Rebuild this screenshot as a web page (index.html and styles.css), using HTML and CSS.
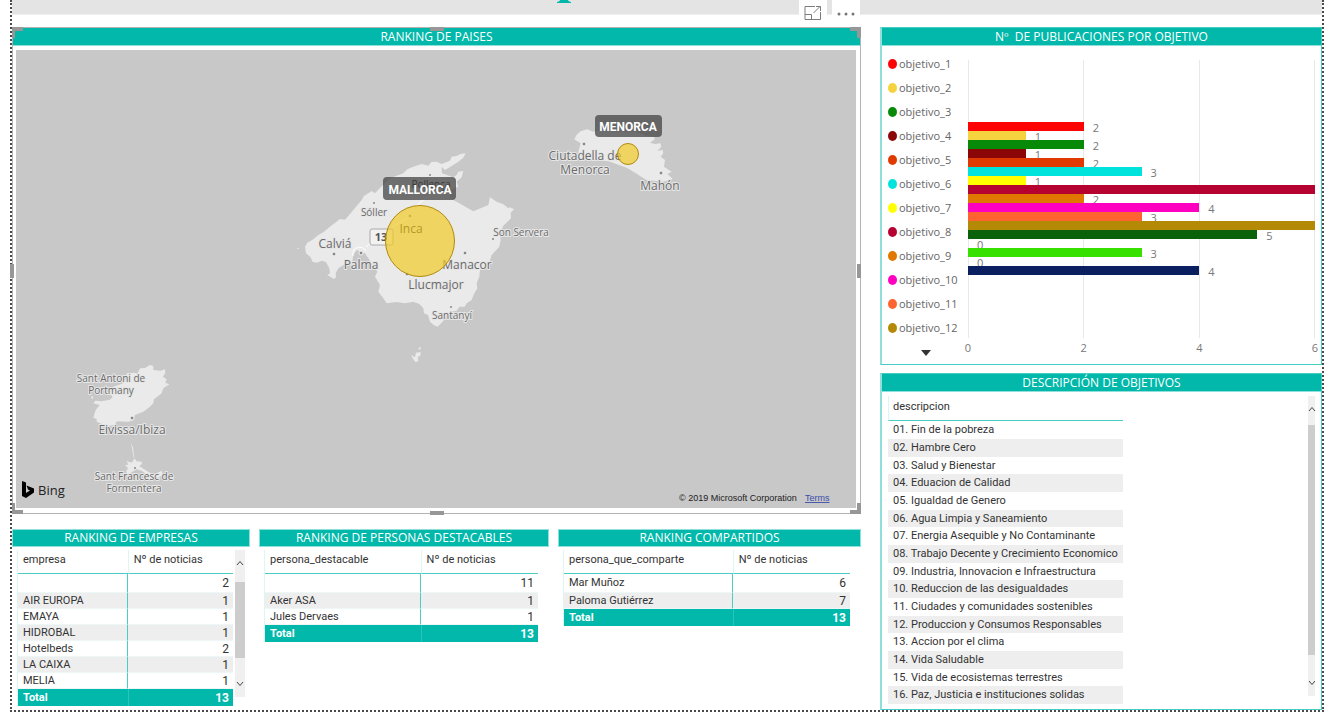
FILE: index.html
```html
<!DOCTYPE html>
<html lang="es">
<head>
<meta charset="utf-8">
<title>Ranking de noticias</title>
<link rel="stylesheet" href="styles.css">
</head>
<body>
<main class="report">
  <header class="banner">
    <svg class="banner-mark" viewBox="0 0 14 3" aria-hidden="true"><path d="M3 0h8q0 1.600 3 2v1H0V2q3-.4 3-2z"/></svg>
    <div class="tools">
      <button class="tool" type="button" aria-label="Modo de enfoque">
        <svg viewBox="0 0 18 16"><path d="M11 1.500H1v13h15.500V7M1 9.500h6.500v5M9.500 8l6.500-6.500M12 1.500h4.500V6"/></svg>
      </button>
      <button class="tool tool-more" type="button" aria-label="Más opciones">
        <svg viewBox="0 0 18 4"><circle cx="2" cy="2" r="1.500"/><circle cx="9" cy="2" r="1.500"/><circle cx="16" cy="2" r="1.500"/></svg>
      </button>
    </div>
  </header>

  <div class="columns">
    <div class="column">
      <section class="panel-map">
        <h2 class="title">RANKING DE PAISES</h2>
        <svg class="map" viewBox="16 50 840 458" role="img" aria-label="Mapa de las Islas Baleares">
          <g class="land">
            <path transform="translate(290 140) scale(.3333)" d="M45 320L52 308 70 298 84 286 100 277 118 262 150 237 165 239 180 222 215 180 222 168 245 153 255 160 272 142 285 130 300 115 340 100 352 88 370 80 395 72 415 77 425 66 440 65 455 72 480 62 485 50 500 48 512 42 527 40 520 53 505 65 485 78 465 90 455 80 456 100 490 112 500 105 505 95 520 93 515 112 500 125 505 140 480 150 480 175 500 185 550 214 595 195 600 172 620 185 640 193 655 205 660 202 672 208 662 218 663 235 640 257 630 280 632 300 628 320 605 345 600 362 590 375 570 390 568 410 560 430 562 445 552 462 545 480 530 490 524 500 508 500 500 512 480 515 465 530 460 543 443 560 432 556 420 545 414 525 402 520 400 505 388 492 370 485 345 490 320 486 290 490 280 475 265 455 270 435 255 410 262 395 248 375 235 355 225 340 200 330 190 345 187 365 165 372 145 385 137 400 138 412 132 417 112 405 120 400 118 385 108 366 95 362 82 368 68 366 62 352 48 340z"/>
            <path transform="translate(290 140) scale(.3333)" d="M363 645L375 652 378 638 392 636 391 648 383 650 385 664 376 666 370 658zM386 624l6-4 0 6-5 4zM20 324l8-1-3 4z"/>
            <path transform="translate(530 100) scale(.3333)" d="M133 118L140 104 152 94 172 88 190 95 215 90 250 95 320 95 350 108 372 110 374 118 360 128 375 132 392 130 394 140 382 152 398 150 400 160 392 170 405 180 402 200 425 215 412 222 428 236 400 245 350 240 330 228 318 220 290 203 240 185 200 178 150 175 145 155 152 130z"/>
            <path transform="translate(0 350) scale(.3333)" d="M328 130L340 110 370 100 380 84 380 70 405 68 412 72 420 55 435 54 450 45 460 48 460 60 482 62 495 58 496 68 489 80 500 88 496 98 508 103 490 115 485 130 462 148 460 160 450 170 430 185 405 195 400 210 385 215 350 214 345 225 320 228 290 215 290 207 280 203 287 180 299 165 280 160 286 152 304 154 330 149 338 141z"/>
            <path transform="translate(0 350) scale(.3333)" d="M375 345L385 344 380 333 395 338 404 325 410 334 425 335 426 342 418 348 430 356 450 368 465 372 485 362 488 376 470 385 450 380 425 362 410 358 392 368 388 380 378 365 384 354zM393 280l6 12 4 30-2 1-5-30zM274 138l5 2v7l-5-3z"/>
          </g>
          <g class="road">
            <path d="M353 256a7 7 0 0 1 13-5M366 247L375 238M392 227L409 217M416 206Q424 198 434 194"/>
          </g>
          <g class="towns">
            <circle cx="334" cy="254" r="2"/><circle cx="361" cy="253" r="2"/><circle cx="410" cy="216" r="2"/><circle cx="465" cy="253" r="2"/><circle cx="407" cy="274" r="2"/>
            <circle cx="584" cy="144" r="2"/><circle cx="661" cy="173" r="2"/><circle cx="132" cy="418" r="2"/>
          </g>
          <g class="villages">
            <circle cx="374" cy="203" r="1"/><circle cx="430" cy="175" r="1"/><circle cx="493" cy="239" r="1"/><circle cx="451" cy="307" r="1"/><circle cx="135" cy="468" r="1"/>
          </g>
          <g class="place place-large">
            <text x="335" y="248">Calviá</text><text x="361" y="269">Palma</text><text class="covered" x="411" y="233">Inca</text>
            <text x="467" y="269">Manacor</text><text x="436" y="289">Llucmajor</text>
            <text x="585" y="160">Ciutadella de</text><text x="585" y="174">Menorca</text><text x="660" y="190">Mahón</text>
            <text x="132" y="434">Eivissa/Ibiza</text>
          </g>
          <g class="place place-small">
            <text x="374" y="216">Sóller</text><text class="covered" x="431" y="188">Pollença</text><text x="521" y="236">Son Servera</text><text x="452" y="319">Santanyí</text>
            <text x="111" y="382">Sant Antoni de</text><text x="111" y="394">Portmany</text>
            <text x="134" y="480">Sant Francesc de</text><text x="134" y="492">Formentera</text>
          </g>
          <g class="shield"><rect x="370" y="229" width="23" height="16" rx="2"/><text x="381" y="241">13</text></g>
          <g class="bubble"><ellipse cx="420" cy="241" rx="34.500" ry="35.500"/><circle cx="628" cy="154" r="10.500"/></g>
          <g class="tag">
            <rect x="383" y="177" width="73" height="23" rx="4"/><text x="420" y="194">MALLORCA</text>
            <rect x="595" y="115" width="67" height="22" rx="4"/><text x="628" y="131">MENORCA</text>
          </g>
          <path class="bing" d="M22 481l4 1.500v10.500l4-2.500-2-1-1.500-4 7.500 3v4L26 498l-4-2z"/>
          <text class="bing-name" x="38" y="495">Bing</text>
          <text class="legal" x="679" y="501">© 2019 Microsoft Corporation</text>
          <a href="#terms"><text class="legal legal-link" x="805" y="501">Terms</text></a>
        </svg>
        <i class="grip grip-nw"></i><i class="grip grip-n"></i><i class="grip grip-ne"></i>
        <i class="grip grip-w"></i><i class="grip grip-e"></i>
        <i class="grip grip-sw"></i><i class="grip grip-s"></i><i class="grip grip-se"></i>
      </section>

      <div class="rankings">
        <section class="ranking">
          <h2 class="title">RANKING DE EMPRESAS</h2>
          <div class="ranking-body">
            <table class="table">
              <colgroup><col class="col-empresa"><col></colgroup>
              <thead><tr><th>empresa</th><th>Nº de noticias</th></tr></thead>
              <tbody>
                <tr><td></td><td>2</td></tr>
                <tr><td>AIR EUROPA</td><td>1</td></tr>
                <tr><td>EMAYA</td><td>1</td></tr>
                <tr><td>HIDROBAL</td><td>1</td></tr>
                <tr><td>Hotelbeds</td><td>2</td></tr>
                <tr><td>LA CAIXA</td><td>1</td></tr>
                <tr><td>MELIA</td><td>1</td></tr>
              </tbody>
              <tfoot><tr><td>Total</td><td>13</td></tr></tfoot>
            </table>
            <div class="scroll scroll-empresas">
              <svg viewBox="0 0 8 6"><path d="M1 5l3-3.500L7 5"/></svg>
              <span class="thumb"></span>
              <svg viewBox="0 0 8 6"><path d="M1 1l3 3.500L7 1"/></svg>
            </div>
          </div>
        </section>
        <section class="ranking">
          <h2 class="title">RANKING DE PERSONAS DESTACABLES</h2>
          <div class="ranking-body ranking-people">
            <table class="table">
              <colgroup><col class="col-persona"><col></colgroup>
              <thead><tr><th>persona_destacable</th><th>Nº de noticias</th></tr></thead>
              <tbody>
                <tr><td></td><td>11</td></tr>
                <tr><td>Aker ASA</td><td>1</td></tr>
                <tr><td>Jules Dervaes</td><td>1</td></tr>
              </tbody>
              <tfoot><tr><td>Total</td><td>13</td></tr></tfoot>
            </table>
          </div>
        </section>
        <section class="ranking">
          <h2 class="title">RANKING COMPARTIDOS</h2>
          <div class="ranking-body ranking-people">
            <table class="table">
              <colgroup><col class="col-comparte"><col></colgroup>
              <thead><tr><th>persona_que_comparte</th><th>Nº de noticias</th></tr></thead>
              <tbody>
                <tr><td>Mar Muñoz</td><td>6</td></tr>
                <tr><td>Paloma Gutiérrez</td><td>7</td></tr>
              </tbody>
              <tfoot><tr><td>Total</td><td>13</td></tr></tfoot>
            </table>
          </div>
        </section>
      </div>
    </div>

    <div class="column column-side">
      <section class="panel-side panel-chart">
        <h2 class="title">Nº&nbsp; DE PUBLICACIONES POR OBJETIVO</h2>
        <div class="chart">
          <div class="legend">
            <ul class="legend-list">
              <li class="c1">objetivo_1</li><li class="c2">objetivo_2</li><li class="c3">objetivo_3</li><li class="c4">objetivo_4</li>
              <li class="c5">objetivo_5</li><li class="c6">objetivo_6</li><li class="c7">objetivo_7</li><li class="c8">objetivo_8</li>
              <li class="c9">objetivo_9</li><li class="c10">objetivo_10</li><li class="c11">objetivo_11</li><li class="c12">objetivo_12</li>
            </ul>
            <button class="legend-more" type="button" aria-label="Más objetivos"><svg viewBox="0 0 10 6"><path d="M0 0h10L5 6z"/></svg></button>
          </div>
          <div class="plot">
            <div class="area">
              <div class="gridlines"><i></i><i></i><i></i></div>
              <div class="bars">
                <div class="bar c1"><b style="width:33.333%"></b><span>2</span></div>
                <div class="bar c2"><b style="width:16.667%"></b><span>1</span></div>
                <div class="bar c3"><b style="width:33.333%"></b><span>2</span></div>
                <div class="bar c4"><b style="width:16.667%"></b><span>1</span></div>
                <div class="bar c5"><b style="width:33.333%"></b><span>2</span></div>
                <div class="bar c6"><b style="width:50%"></b><span>3</span></div>
                <div class="bar c7"><b style="width:16.667%"></b><span>1</span></div>
                <div class="bar c8"><b style="width:100%"></b></div>
                <div class="bar c9"><b style="width:33.333%"></b><span>2</span></div>
                <div class="bar c10"><b style="width:66.667%"></b><span>4</span></div>
                <div class="bar c11"><b style="width:50%"></b><span>3</span></div>
                <div class="bar c12"><b style="width:100%"></b></div>
                <div class="bar c13"><b style="width:83.333%"></b><span>5</span></div>
                <div class="bar c14"><b style="width:0%"></b><span>0</span></div>
                <div class="bar c15"><b style="width:50%"></b><span>3</span></div>
                <div class="bar c16"><b style="width:0%"></b><span>0</span></div>
                <div class="bar c17"><b style="width:66.667%"></b><span>4</span></div>
              </div>
            </div>
            <div class="axis"><span>0</span><span>2</span><span>4</span><span>6</span></div>
          </div>
        </div>
      </section>

      <section class="panel-side">
        <h2 class="title">DESCRIPCIÓN DE OBJETIVOS</h2>
        <div class="goals-body">
          <table class="goals">
            <thead><tr><th>descripcion</th></tr></thead>
            <tbody>
              <tr><td>01. Fin de la pobreza</td></tr>
              <tr><td>02. Hambre Cero</td></tr>
              <tr><td>03. Salud y Bienestar</td></tr>
              <tr><td>04. Eduacion de Calidad</td></tr>
              <tr><td>05. Igualdad de Genero</td></tr>
              <tr><td>06. Agua Limpia y Saneamiento</td></tr>
              <tr><td>07. Energia Asequible y No Contaminante</td></tr>
              <tr><td>08. Trabajo Decente y Crecimiento Economico</td></tr>
              <tr><td>09. Industria, Innovacion e Infraestructura</td></tr>
              <tr><td>10. Reduccion de las desigualdades</td></tr>
              <tr><td>11. Ciudades y comunidades sostenibles</td></tr>
              <tr><td>12. Produccion y Consumos Responsables</td></tr>
              <tr><td>13. Accion por el clima</td></tr>
              <tr><td>14. Vida Saludable</td></tr>
              <tr><td>15. Vida de ecosistemas terrestres</td></tr>
              <tr><td>16. Paz, Justicia e instituciones solidas</td></tr>
            </tbody>
          </table>
          <div class="scroll scroll-goals">
            <svg viewBox="0 0 8 6"><path d="M1 5l3-3.500L7 5"/></svg>
            <span class="thumb"></span>
            <svg viewBox="0 0 8 6"><path d="M1 1l3 3.500L7 1"/></svg>
          </div>
        </div>
      </section>
    </div>
  </div>
</main>
</body>
</html>
```

FILE: styles.css
```css
:root {
  --teal: #01b8aa;
  --teal-light: #8fe0da;
  --teal-pale: #dcf6f4;
  --grip: #979797;
}

* { box-sizing: border-box; }

body {
  margin: 0;
  background: #fff;
  color: #333;
  font: 11px/16px "Open Sans", "Noto Sans", sans-serif;
}

svg { display: block; }

.report {
  margin: 0 9px 9px 10px;
  border: 2px dotted #4a4a4a;
  border-top: 0;
}

/* Top banner and visual toolbar */
.banner {
  position: relative;
  height: 15px;
  background: #e4e4e4;
  border-bottom: 1px solid #f0f0f0;
}

.banner-mark {
  width: 14px;
  height: 3px;
  margin-left: 545px;
  fill: var(--teal);
}

.tools {
  position: absolute;
  top: 0;
  left: 787px;
  z-index: 2;
  display: flex;
  gap: 5px;
}

.tool {
  display: flex;
  align-items: flex-end;
  justify-content: center;
  width: 28px;
  height: 24px;
  padding: 0 0 3px;
  border: 0;
  background: #fff;
}

.tool svg {
  width: 18px;
  height: 16px;
  fill: none;
  stroke: #7c7c7c;
}

.tool-more { padding-bottom: 8px; }
.tool-more svg { height: 4px; fill: #777; stroke: none; }

/* Page columns */
.columns {
  display: grid;
  grid-template-columns: minmax(0, 849fr) minmax(0, 442fr);
  gap: 19px;
  padding-top: 12px;
}

.title {
  margin: 0;
  background: var(--teal);
  border: 1px solid var(--teal-light);
  color: #fff;
  font-size: 12px;
  font-weight: 400;
  line-height: 16px;
  text-align: center;
}

/* Map */
.panel-map {
  position: relative;
  border: 1px solid #b4b4b4;
  margin-bottom: 15px;
}

.panel-map .title { padding-top: 1px; border-width: 0 0 1px; }

.map {
  width: calc(100% - 7px);
  height: auto;
  margin: 4px 4px 5px 3px;
  background: #c8c8c8;
}

.land { fill: #eaeaea; }
.road { fill: none; stroke: #fff; stroke-width: 1; }
.towns { fill: #888; stroke: #f6f6f6; stroke-width: 1; }
.villages { fill: #888; }

.place {
  fill: #6a6a6a;
  stroke: #e6e6e6;
  stroke-width: 2px;
  paint-order: stroke;
  text-anchor: middle;
}

.place-large { font-size: 12px; }
.place-small { font-size: 10px; }
.place .covered { fill: #222; }

.shield rect { fill: #f2f2f2; stroke: #aaa; }
.shield text { font-size: 11px; font-weight: 700; fill: #555; text-anchor: middle; }

.bubble { fill: #f2cb28; fill-opacity: .7; stroke: #b08a0c; }

.tag rect { fill: #444; fill-opacity: .75; }
.tag text { font: 700 12px Roboto, sans-serif; fill: #fff; text-anchor: middle; }

.bing-name { font-size: 13px; fill: #222; }
.legal { font: 9px "Liberation Sans", sans-serif; fill: #222; }
.legal-link { fill: #3b4ba8; text-decoration: underline; }

/* Selection handles */
.grip { position: absolute; border: 0 solid var(--grip); }
.grip-nw, .grip-ne, .grip-sw, .grip-se { width: 11px; height: 11px; }
.grip-nw { top: -1px; left: -1px; border-width: 4px 0 0 3px; }
.grip-ne { top: -1px; right: -1px; border-width: 4px 4px 0 0; }
.grip-sw { bottom: -1px; left: -1px; border-width: 0 0 4px 3px; }
.grip-se { bottom: -1px; right: -1px; border-width: 0 4px 4px 0; }
.grip-n, .grip-s { left: calc(50% - 7px); width: 14px; border-top-width: 4px; }
.grip-n { top: -1px; }
.grip-s { bottom: -2px; }
.grip-w, .grip-e { top: calc(50% - 7px); height: 14px; border-left-width: 4px; }
.grip-w { left: -3px; }
.grip-e { right: -1px; }

/* Rankings */
.rankings {
  display: grid;
  grid-template-columns: minmax(0, 238fr) minmax(0, 290fr) minmax(0, 303fr);
  gap: 9px;
}

.ranking-body {
  display: flex;
  gap: 2px;
  padding: 3px 5px;
}

.ranking-people { padding-right: 11px; }

.table,
.goals {
  font-family: Roboto, "Noto Sans", sans-serif;
  border-collapse: separate;
  border-spacing: 0;
}

.table {
  flex: 1;
  min-width: 0;
  table-layout: fixed;
  border-left: 1px solid var(--teal-pale);
}

.col-empresa { width: 51%; }
.col-persona { width: 57%; }
.col-comparte { width: 59%; }

.table th,
.goals th {
  height: 24px;
  padding: 0 5px 3px;
  border-bottom: 1px solid #4ccdc4;
  font-weight: 400;
  text-align: left;
  white-space: nowrap;
}

.table td {
  height: 16px;
  padding: 0 4px 0 5px;
  line-height: 14px;
  border-bottom: 1px solid #edf7f6;
}

.table th + th { border-left: 1px solid var(--teal-pale); }
.table tbody td:first-child { border-right: 1px solid #4ccdc4; }
.table td + td { text-align: right; font-size: 12px; }
.table tbody tr:first-child td { height: 19px; }
.table tbody tr:nth-child(even) { background: #eee; }

.table tfoot td {
  height: 17px;
  background: var(--teal);
  border-bottom: 0;
  color: #fff;
  font-weight: 700;
}

.table tfoot td + td { border-left: 1px solid #2cc4b8; }

.scroll {
  display: flex;
  flex-direction: column;
  align-items: center;
  justify-content: space-between;
  background: #f0f0f0;
  padding: 10px 0;
}

.scroll svg {
  width: 8px;
  height: 6px;
  fill: none;
  stroke: #444;
}

.thumb { width: 100%; background: #cdcdcd; }
.scroll-empresas { width: 10px; margin-bottom: 9px; }
.scroll-empresas .thumb { flex: 0 1 76px; margin-bottom: 8px; }

/* Side panels */
.column-side {
  display: flex;
  flex-direction: column;
  gap: 8px;
}

.panel-side {
  border: 1px solid #45ccc3;
  border-left: 2px solid var(--teal-light);
}

.panel-side .title { padding-top: 1px; border-width: 0 0 1px; }

.chart {
  display: flex;
  gap: 9px;
  padding: 6px 6px 5px;
}

.legend { width: 71px; }
.legend-list { margin: 0; padding: 0; list-style: none; }

.legend-list li {
  display: flex;
  align-items: center;
  gap: 2px;
  height: 24px;
  color: #666;
}

.legend-list li::before {
  content: "";
  width: 9px;
  height: 10px;
  border-radius: 50%;
  background: var(--c);
}

.legend-more {
  display: block;
  margin: 7px auto 0;
  padding: 3px 0 3px 5px;
  border: 0;
  background: none;
}

.legend-more svg { width: 10px; height: 6px; fill: #333; }

.plot { flex: 1; min-width: 0; padding-top: 8px; }

.area { display: grid; min-height: 278px; }

.gridlines,
.bars { grid-area: 1 / 1; }

.gridlines {
  display: grid;
  grid-template-columns: repeat(3, 1fr);
  border-right: 1px solid #e8e8e8;
}

.gridlines i { border-left: 1px solid #e8e8e8; }
.bars { align-self: center; padding-bottom: 2px; }

.bar {
  position: relative;
  display: flex;
  align-items: center;
  gap: 9px;
  height: 9px;
  color: #777;
}

.bar b { height: 9px; background: var(--c); }
.bar span { line-height: 9px; padding-top: 2px; }

.axis {
  display: flex;
  justify-content: space-between;
  margin: 2px -5px 0;
  color: #777;
}

.axis span { width: 10px; text-align: center; }

.c1 { --c: #fd0303; }
.c2 { --c: #f5d33f; }
.c3 { --c: #078a07; }
.c4 { --c: #8b0707; }
.c5 { --c: #e03a00; }
.c6 { --c: #00e3dc; }
.c7 { --c: #ff0; }
.c8 { --c: #b50230; }
.c9 { --c: #e07800; }
.c10 { --c: #ff00c0; }
.c11 { --c: #ff6430; }
.c12 { --c: #b48905; }
.c13 { --c: #09610a; }
.c15 { --c: #38e000; }
.c17 { --c: #0a1f5f; }

/* Goals list */
.goals-body {
  display: flex;
  justify-content: space-between;
  padding: 4px 6px 5px;
}

.goals { width: 231px; }
.goals th { height: 25px; border-left: 1px solid var(--teal-pale); padding-left: 4px; }
.goals td { height: 18px; padding: 0 5px; white-space: nowrap; }
.goals tr:nth-child(3n) td { height: 17px; }
.goals tbody tr:nth-child(even) { background: #eee; }

.scroll-goals { width: 7px; margin-bottom: 8px; }
.scroll-goals .thumb { flex: 0 1 230px; margin-bottom: 12px; }
```
